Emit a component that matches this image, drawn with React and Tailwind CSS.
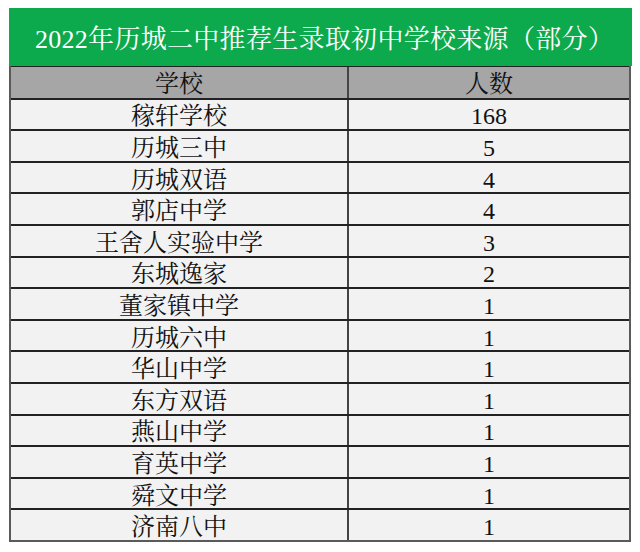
import React from "react";

const rows = [
  ["稼轩学校", "168"],
  ["历城三中", "5"],
  ["历城双语", "4"],
  ["郭店中学", "4"],
  ["王舍人实验中学", "3"],
  ["东城逸家", "2"],
  ["董家镇中学", "1"],
  ["历城六中", "1"],
  ["华山中学", "1"],
  ["东方双语", "1"],
  ["燕山中学", "1"],
  ["育英中学", "1"],
  ["舜文中学", "1"],
  ["济南八中", "1"],
];

const font = {
  fontFamily:
    '"Liberation Serif", "Noto Serif CJK SC", "Source Han Serif SC", "AR PL UMing CN", "Noto Sans CJK SC", serif',
};

export default function App() {
  return (
    <div className="w-[640px] h-[552px] bg-white pt-[8px] pl-[9px]" style={font}>
      <div className="w-[623px] h-[58px] bg-[#0caa4d] flex items-center justify-center pt-[6px] pl-[8px]">
        <span className="text-white text-[26px] leading-none tracking-[0.3px]">
          2022年历城二中推荐生录取初中学校来源（部分）
        </span>
      </div>
      <div className="w-[622px] h-[476px] grid grid-rows-[repeat(15,1fr)] border-x-2 border-b-2 border-[#5a5a5a] bg-[#f2f2f2] text-[#111] text-[24px] leading-none">
        <div className="grid grid-cols-[338px_1fr] bg-[#a6a6a6] border-t border-[#222]">
          <div className="flex items-center justify-center pt-[3px] border-r-2 border-[#444]">学校</div>
          <div className="flex items-center justify-center pt-[3px]">人数</div>
        </div>
        {rows.map(([name, n]) => (
          <div key={name} className="grid grid-cols-[338px_1fr] border-t-2 border-[#222]">
            <div className="flex items-center justify-center pt-[4px] border-r-2 border-[#444]">{name}</div>
            <div className="flex items-center justify-center pt-[4px]">{n}</div>
          </div>
        ))}
      </div>
    </div>
  );
}
